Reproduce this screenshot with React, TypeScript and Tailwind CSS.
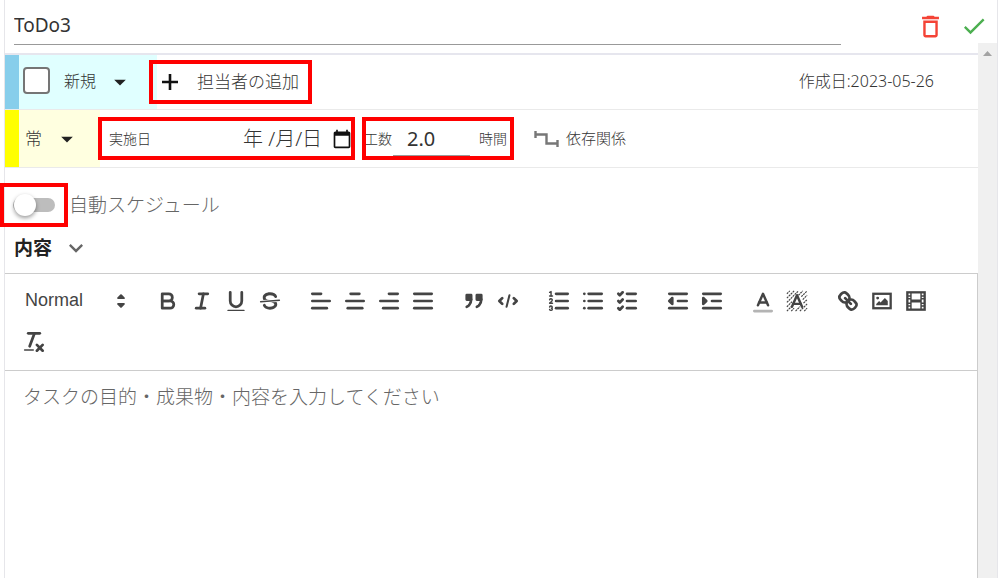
import { useState } from "react";
import type { ReactNode } from "react";

//icons
import { MdArrowDropDown, MdCalendarToday, MdCheck, MdDeleteOutline, MdExpandMore } from "react-icons/md";

type IconProps = { children: ReactNode };

const Icon: React.FC<IconProps> = ({ children }) => (
    <svg
        viewBox="0 0 18 18"
        className="h-[26px] w-[26px] shrink-0"
        fill="none"
        stroke="#444"
        strokeWidth="1.9"
        strokeLinecap="round"
        strokeLinejoin="round"
        aria-hidden="true">
        {children}
    </svg>
);

// three horizontal rules, each given as [x1, x2]
const Lines: React.FC<{ rows: number[][] }> = ({ rows }) => (
    <>
        {rows.map(([x1, x2], i) => (
            <line key={i} x1={x1} x2={x2} y1={4 + i * 5} y2={4 + i * 5} />
        ))}
    </>
);

const groups: { label: string; icon: ReactNode }[][] = [
    [
        {
            label: "bold",
            icon: (
                <>
                    <path d="M5,4H9.5A2.5,2.5,0,0,1,12,6.5v0A2.5,2.5,0,0,1,9.5,9H5V4Z" />
                    <path d="M5,9h5.5A2.5,2.5,0,0,1,13,11.5v0A2.5,2.5,0,0,1,10.5,14H5V9Z" />
                </>
            ),
        },
        {
            label: "italic",
            icon: (
                <>
                    <line x1="7" x2="13" y1="4" y2="4" />
                    <line x1="5" x2="11" y1="14" y2="14" />
                    <line x1="8" x2="10" y1="14" y2="4" />
                </>
            ),
        },
        {
            label: "underline",
            icon: (
                <>
                    <path d="M5,3V9a4.012,4.012,0,0,0,4,4H9a4.012,4.012,0,0,0,4-4V3" />
                    <rect x="3" y="15" width="12" height="1" rx="0.5" fill="#444" stroke="none" />
                </>
            ),
        },
        {
            label: "strike",
            icon: (
                <>
                    <line x1="15.5" x2="2.5" y1="8.5" y2="9.5" strokeWidth="1" />
                    <g fill="#444" stroke="none">
                        <path d="M9.007,8C6.542,7.791,6,7.519,6,6.5,6,5.792,7.283,5,9,5c1.571,0,2.765.679,2.969,1.309a1,1,0,0,0,1.9-.617C13.356,4.106,11.354,3,9,3,6.2,3,4,4.538,4,6.5a3.2,3.2,0,0,0,.5,1.843Z" />
                        <path d="M8.984,10C11.457,10.208,12,10.479,12,11.5c0,.708-1.283,1.5-3,1.5-1.571,0-2.765-.679-2.969-1.309a1,1,0,1,0-1.9.617C4.644,13.894,6.646,15,9,15c2.8,0,5-1.538,5-3.5a3.2,3.2,0,0,0-.5-1.843Z" />
                    </g>
                </>
            ),
        },
    ],
    [
        { label: "align left", icon: <Lines rows={[[3, 9], [3, 15], [3, 13]]} /> },
        { label: "align center", icon: <Lines rows={[[6, 12], [3, 15], [4, 14]]} /> },
        { label: "align right", icon: <Lines rows={[[9, 15], [3, 15], [5, 15]]} /> },
        { label: "justify", icon: <Lines rows={[[3, 15], [3, 15], [3, 15]]} /> },
    ],
    [
        {
            label: "blockquote",
            icon: (
                <g fill="#444">
                    <rect x="4" y="5" width="3" height="3" />
                    <rect x="11" y="5" width="3" height="3" />
                    <path d="M7,8c0,4.031-3,5-3,5" />
                    <path d="M14,8c0,4.031-3,5-3,5" />
                </g>
            ),
        },
        {
            label: "code block",
            icon: (
                <>
                    <polyline points="5 7 3 9 5 11" />
                    <polyline points="13 7 15 9 13 11" />
                    <line x1="10" x2="8" y1="5" y2="13" strokeWidth="1.4" />
                </>
            ),
        },
    ],
    [
        {
            label: "ordered list",
            icon: (
                <>
                    <Lines rows={[[7, 15], [7, 15], [7, 15]]} />
                    <g strokeWidth="1">
                        <line x1="2.5" x2="4.5" y1="5.5" y2="5.5" />
                        <path d="M2.5,3L3.5,2.5V5.5" />
                        <path d="M4.5,10.5h-2c0-.234,1.85-1.076,1.85-2.234A0.959,0.959,0,0,0,2.5,8.156" />
                        <path d="M2.5,14.846a0.959,0.959,0,0,0,1.85-.109A0.7,0.7,0,0,0,3.75,14a0.688,0.688,0,0,0,.6-0.736,0.959,0.959,0,0,0-1.85-.109" />
                    </g>
                </>
            ),
        },
        {
            label: "bullet list",
            icon: (
                <>
                    <Lines rows={[[6, 15], [6, 15], [6, 15]]} />
                    <Lines rows={[[3, 3], [3, 3], [3, 3]]} />
                </>
            ),
        },
        {
            label: "check list",
            icon: (
                <>
                    <Lines rows={[[9, 15], [9, 15], [9, 15]]} />
                    <polyline points="3 4 4 5 6 3" />
                    <polyline points="3 9 4 10 6 8" />
                    <polyline points="3 14 4 15 6 13" />
                </>
            ),
        },
    ],
    [
        {
            label: "outdent",
            icon: (
                <>
                    <Lines rows={[[3, 15], [9, 15], [3, 15]]} />
                    <polyline points="5 7 5 11 3 9 5 7" fill="#444" />
                </>
            ),
        },
        {
            label: "indent",
            icon: (
                <>
                    <Lines rows={[[3, 15], [9, 15], [3, 15]]} />
                    <polyline points="3 7 3 11 5 9 3 7" fill="#444" />
                </>
            ),
        },
    ],
    [
        {
            label: "text color",
            icon: (
                <>
                    <line x1="3" x2="15" y1="16" y2="16" opacity="0.4" />
                    <polyline points="5.5 12 9 4 12.5 12" strokeWidth="1.7" />
                    <line x1="11.63" x2="6.38" y1="10" y2="10" strokeWidth="1.7" />
                </>
            ),
        },
        {
            label: "background color",
            icon: (
                <>
                    <path
                        d="M2 4L4 2M2 7L7 2M2 10L10 2M2 13L5.5 9.5M10 5L13 2M2 16L5 13M12 6L16 2M5 16L7 14M13 8L16 5M8 16L11 13M13.5 10.5L16 8M11 16L16 11M14 16L16 14"
                        strokeWidth="0.8"
                        strokeDasharray="1.4 0.5"
                        strokeLinecap="butt"
                    />
                    <polyline points="5.5 13 9 5 12.5 13" strokeWidth="1.7" />
                    <line x1="11.63" x2="6.38" y1="11" y2="11" strokeWidth="1.7" />
                </>
            ),
        },
    ],
    [
        {
            label: "link",
            icon: (
                <>
                    <line x1="7" x2="11" y1="7" y2="11" />
                    <path d="M8.9,4.577a3.476,3.476,0,0,1,.36,4.679A3.476,3.476,0,0,1,4.577,8.9C3.185,7.5,2.035,6.4,4.217,4.217S7.5,3.185,8.9,4.577Z" />
                    <path d="M13.423,9.1a3.476,3.476,0,0,0-4.679-.36,3.476,3.476,0,0,0,.36,4.679c1.392,1.392,2.5,2.542,4.679.36S14.815,10.5,13.423,9.1Z" />
                </>
            ),
        },
        {
            label: "image",
            icon: (
                <>
                    <rect x="3" y="4" width="12" height="10" strokeWidth="1.6" strokeLinejoin="miter" />
                    <circle cx="6" cy="7" r="1" fill="#444" stroke="none" />
                    <polyline points="5 12 5 11 7 9 8 10 11 7 13 9 13 12 5 12" fill="#444" stroke="none" />
                </>
            ),
        },
        {
            label: "video",
            icon: (
                <>
                    <rect x="3" y="3" width="12" height="12" strokeWidth="1.6" strokeLinejoin="miter" />
                    <path
                        d="M5 3h1v12h-1zM12 3h1v12h-1zM5 8h8v2h-8zM3 5h3v1h-3zM3 7h3v1h-3zM3 10h3v1h-3zM3 12h3v1h-3zM12 5h3v1h-3zM12 7h3v1h-3zM12 10h3v1h-3zM12 12h3v1h-3z"
                        fill="#444"
                        stroke="none"
                    />
                </>
            ),
        },
    ],
];

// red frame drawn over a control
const Mark: React.FC<{ className: string }> = ({ className }) => (
    <span className={`pointer-events-none absolute border-4 border-[#ff0000] ${className}`} />
);

const Toolbar: React.FC = () => (
    <div className="flex flex-wrap gap-x-[17px] border-b border-[#ccc] px-3 pb-2 pt-[6px]">
        <button className="flex h-[41px] w-[117px] items-center justify-between pl-2 font-['Liberation_Sans',sans-serif] text-[18px] text-[#444]">
            Normal
            <Icon>
                <polygon points="7 11 9 13 11 11 7 11" fill="#444" strokeWidth="1.4" />
                <polygon points="7 7 9 5 11 7 7 7" fill="#444" strokeWidth="1.4" />
            </Icon>
        </button>
        {groups.map((group, i) => (
            <div key={i} className="flex">
                {group.map(({ label, icon }) => (
                    <button key={label} aria-label={label} className="flex h-[41px] w-[34px] items-center justify-center">
                        <Icon>{icon}</Icon>
                    </button>
                ))}
            </div>
        ))}
        <button aria-label="clear format" className="flex h-[41px] w-[34px] items-center justify-center">
            <Icon>
                <line x1="5" x2="13" y1="3" y2="3" />
                <line x1="6" x2="9.35" y1="12" y2="3" />
                <line x1="11" x2="15" y1="11" y2="15" />
                <line x1="15" x2="11" y1="11" y2="15" />
                <rect x="2" y="14" width="7" height="1" rx="0.5" fill="#444" stroke="none" />
            </Icon>
        </button>
    </div>
);

const App: React.FC = () => {
    const [title, setTitle] = useState("ToDo3");
    const [hours, setHours] = useState("2.0");
    const [done, setDone] = useState(false);
    const [auto, setAuto] = useState(false);

    return (
        <div className="flex h-screen flex-col overflow-hidden bg-white pl-1 pr-[2px] font-['Noto_Sans','Noto_Sans_CJK_JP',sans-serif] text-[#333]">
            <div className="flex min-h-0 flex-1 flex-col border-x border-[#e6e6ea]">
                <header className="flex h-[43px] shrink-0 items-start px-[9px]">
                    <input
                        aria-label="タイトル"
                        value={title}
                        onChange={(e) => setTitle(e.target.value)}
                        className="h-[45px] min-w-0 flex-1 border-b border-[#999] pt-[6px] text-[19px] outline-none"
                    />
                    <button aria-label="削除" className="ml-[75px] mt-3 text-[#f44336]">
                        <MdDeleteOutline size={29} />
                    </button>
                    <button aria-label="保存" className="ml-[15px] mt-3 text-[#4caf50]">
                        <MdCheck size={28} />
                    </button>
                </header>

                <div className="flex min-h-0 flex-1">
                    <main className="flex min-w-0 flex-1 flex-col pt-[10px]">
                        <div className="flex h-[57px] shrink-0 items-stretch border-b border-t-2 border-b-[#eaeaea] border-t-[#e6e6ee]">
                            <div className="flex w-[152px] items-center border-l-14 border-[#87ceeb] bg-[#e0ffff] pb-[3px] pl-1">
                                <input
                                    id="done"
                                    type="checkbox"
                                    checked={done}
                                    onChange={(e) => setDone(e.target.checked)}
                                    className="h-[27px] w-[27px] appearance-none rounded border-2 border-[#757575] bg-white checked:bg-[#757575]"
                                />
                                <label htmlFor="done" className="ml-[14px] text-[16px] font-light">新規</label>
                                <button aria-label="状態" className="ml-[10px] pt-[2px] text-[#222]">
                                    <MdArrowDropDown size={28} />
                                </button>
                            </div>
                            <div className="relative flex items-center">
                                <button className="flex items-center gap-[14px] text-[17px] font-light">
                                    <svg viewBox="0 0 26 26" className="h-[26px] w-[26px]" stroke="#111" strokeWidth="2.6" aria-hidden="true">
                                        <path d="M5 13H21M13 5V21" />
                                    </svg>
                                    担当者の追加
                                </button>
                                <Mark className="inset-y-[5px] -left-2 -right-[13px]" />
                            </div>
                            <span className="ml-auto self-center pb-[2px] pr-[44px] text-[16px] font-light">作成日:2023-05-26</span>
                        </div>

                        <div className="flex h-[58px] shrink-0 items-stretch border-b border-[#eaeaea]">
                            <div className="flex w-[95px] items-center border-l-14 border-[#ffff00] bg-[#ffffe0] pl-[6px] text-[17px] font-light">
                                常
                                <button aria-label="優先度" className="ml-[11px] text-[#222]">
                                    <MdArrowDropDown size={28} />
                                </button>
                            </div>
                            <div className="relative flex items-center pl-[9px]">
                                <label htmlFor="date" className="text-[14px] font-light">実施日</label>
                                <input
                                    id="date"
                                    defaultValue="年 /月/日"
                                    className="ml-[92px] w-[89px] text-[20px] font-light outline-none"
                                />
                                <button aria-label="カレンダー" className="mr-px text-[#111]">
                                    <MdCalendarToday size={20} />
                                </button>
                                <Mark className="-left-[2px] -right-[2px] inset-y-[7px]" />
                            </div>
                            <div className="relative ml-[11px] flex items-center text-[14px] font-light">
                                <label htmlFor="hours">工数</label>
                                <input
                                    id="hours"
                                    value={hours}
                                    onChange={(e) => setHours(e.target.value)}
                                    className="ml-[1px] h-[34px] w-[77px] border-b border-[#999] pl-[14px] text-[20px] font-normal outline-none"
                                />
                                <span className="ml-[9px]">時間</span>
                                <Mark className="-left-[2px] -right-[7px] inset-y-[7px]" />
                            </div>
                            <button className="ml-[27px] flex items-center gap-[7px] text-[15px] font-light">
                                <svg viewBox="0 0 25 18" className="h-[18px] w-[25px]" fill="none" stroke="#777" strokeWidth="2.4" aria-hidden="true">
                                    <path d="M1.5 1v7M1 4.5h11.5v9H24M23.5 10v7" />
                                </svg>
                                依存関係
                            </button>
                        </div>

                        <div className="mt-[15px] flex h-[44px] shrink-0 items-center">
                            <label className="relative ml-2 flex h-[44px] items-center text-[19px] font-light text-[#666]">
                                <input
                                    type="checkbox"
                                    role="switch"
                                    checked={auto}
                                    onChange={(e) => setAuto(e.target.checked)}
                                    className="peer h-[14px] w-[42px] appearance-none rounded-full bg-[#bdbdbd]"
                                />
                                <span className="absolute left-px h-[22px] w-[22px] rounded-full bg-white shadow-[0_2px_4px_rgba(0,0,0,0.4)] peer-checked:translate-x-5" />
                                <span className="ml-[14px]">自動スケジュール</span>
                                <Mark className="-left-[13px] top-0 h-[44px] w-[68px]" />
                            </label>
                        </div>

                        <button className="flex h-[46px] shrink-0 items-center gap-[10px] pb-1 pl-[9px] text-left text-[19px] font-bold text-[#222]">
                            内容
                            <MdExpandMore size={28} className="text-[#666]" />
                        </button>

                        <section className="flex min-h-0 flex-1 flex-col border-r border-t border-[#ccc]">
                            <Toolbar />
                            <textarea
                                aria-label="内容"
                                placeholder="タスクの目的・成果物・内容を入力してください"
                                className="w-full flex-1 resize-none px-[18px] py-3 text-[19px] font-light outline-none placeholder:text-[#666]"
                            />
                        </section>
                    </main>

                    <div className="flex w-[19px] shrink-0 justify-center bg-[#f0f0f0] pt-2">
                        <svg viewBox="0 0 9 5" className="h-[5px] w-[9px]" aria-hidden="true">
                            <path d="M0 5L4.5 0L9 5Z" fill="#a3a3a3" />
                        </svg>
                    </div>
                </div>
            </div>
        </div>
    );
};

export default App;
